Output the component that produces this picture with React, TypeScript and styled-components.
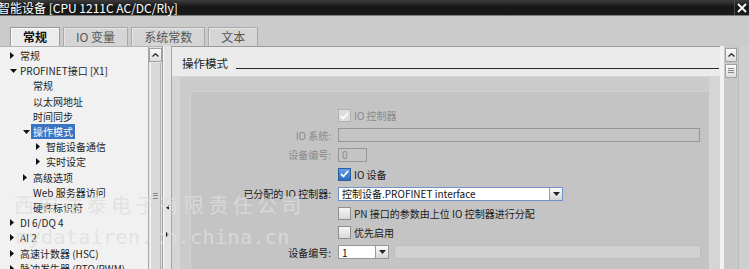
import styled, { createGlobalStyle } from "styled-components";

const GlobalStyle = createGlobalStyle`
  html, body {
    margin: 0;
    padding: 0;
    background: #cbcbcb;
    overflow: hidden;
  }
  body {
    font-family: "Noto Sans CJK SC", "Liberation Sans", sans-serif;
  }
`;

const Window = styled.div`
  position: relative;
  width: 749px;
  height: 269px;
  overflow: hidden;
  display: flex;
  flex-direction: column;
  background: #cbcbcb;
`;

const TitleBar = styled.div`
  height: 15px;
  flex: none;
  display: flex;
  align-items: center;
  background: linear-gradient(#3c3c3c, #171717 45%, #1b1b1b);
  border-bottom: 1px solid #808080;
  color: #fff;
`;

const Title = styled.div`
  flex: 1;
  margin-left: -2px;
  font-size: 12px;
  line-height: 15px;
  white-space: nowrap;
`;

const CloseBtn = styled.div`
  width: 14px;
  height: 15px;
  border-left: 1px solid #4c4c4c;
  display: flex;
  align-items: center;
  justify-content: center;
`;

const TabStrip = styled.div`
  height: 30px;
  flex: none;
  box-sizing: border-box;
  display: flex;
  align-items: flex-end;
  gap: 3px;
  padding-left: 10px;
`;

const Tab = styled.div<{ $active?: boolean }>`
  height: 19px;
  box-sizing: border-box;
  padding: 0 12px;
  display: flex;
  align-items: center;
  font-size: 12px;
  line-height: 16px;
  border: 1px solid ${(p) => (p.$active ? "#9a9a9a" : "#a9a9a9")};
  border-bottom: none;
  background: ${(p) => (p.$active ? "#ececec" : "#d5d5d5")};
  box-shadow: inset 1px 1px 0 ${(p) => (p.$active ? "#fafafa" : "#e6e6e6")};
  color: ${(p) => (p.$active ? "#111" : "#555")};
  font-weight: ${(p) => (p.$active ? 700 : 400)};
`;

const Body = styled.div`
  flex: 1;
  display: flex;
  min-height: 0;
`;

const TreePane = styled.div`
  width: 148px;
  flex: none;
  background: #f1f1f1;
  border-right: 1px solid #a8a8a8;
  border-top: 1px solid #b4b4b4;
  padding-top: 1px;
  overflow: hidden;
`;

const TreeRow = styled.div<{ $level: number }>`
  height: 15.2px;
  display: flex;
  align-items: center;
  padding-left: ${(p) => 7 + p.$level * 13}px;
  font-size: 10px;
  line-height: 13px;
  color: #1e1e1e;
  white-space: nowrap;
`;

const ArrowSlot = styled.div`
  width: 13px;
  flex: none;
  display: flex;
  align-items: center;
  padding-left: 3px;
  box-sizing: border-box;
`;

const TreeText = styled.span<{ $selected?: boolean }>`
  padding: 1px 2px;
  margin-left: -2px;
  background: ${(p) => (p.$selected ? "#3a74c2" : "transparent")};
  color: ${(p) => (p.$selected ? "#fff" : "inherit")};
`;

const TreeScroll = styled.div`
  width: 13px;
  flex: none;
  display: flex;
  flex-direction: column;
  background: #e3e3e3;
  border-right: 1px solid #9c9c9c;
  border-top: 1px solid #b4b4b4;
`;

const ScrollBtn = styled.div`
  height: 14px;
  flex: none;
  box-sizing: border-box;
  border: 1px solid #a2a2a2;
  background: linear-gradient(#fbfbfb, #dcdcdc);
  display: flex;
  align-items: center;
  justify-content: center;
  margin: 1px 0;
`;

const Thumb = styled.div`
  height: 270px;
  flex: none;
  margin: 0 1px;
  box-sizing: border-box;
  border-left: 1px solid #f6f6f6;
  border-right: 1px solid #b0b0b0;
  background: #d9d9d9;
  display: flex;
  justify-content: center;
  padding-top: 130px;
`;

const Grip = styled.div`
  width: 5px;
  height: 4px;
  border-top: 1px solid #888;
  border-bottom: 1px solid #888;
  position: relative;
  &::after {
    content: "";
    position: absolute;
    left: 0;
    right: 0;
    top: 1px;
    border-top: 1px solid #888;
  }
`;

const Splitter = styled.div`
  width: 7px;
  flex: none;
  display: flex;
  flex-direction: column;
  align-items: center;
  gap: 22px;
  padding-top: 159px;
  background: #e4e4e4;
  border-left: 1px solid #fafafa;
  border-right: 1px solid #a4a4a4;
`;

const Editor = styled.div`
  width: 548px;
  flex: none;
  display: flex;
  flex-direction: column;
`;

const EditorHeader = styled.div`
  height: 30px;
  flex: none;
  box-sizing: border-box;
  display: flex;
  align-items: flex-start;
  padding-left: 10px;
  background: #ebebeb;
  border-top: 1px solid #9a9a9a;
`;

const HeaderTitle = styled.div`
  margin-top: 8px;
  font-size: 11.5px;
  line-height: 16px;
  color: #222;
`;

const HeaderRule = styled.div`
  flex: 1;
  height: 1px;
  margin: 21px 1px 0 8px;
  background: #2a2a2a;
`;

const EditorBody = styled.div`
  flex: 1;
  display: flex;
  padding: 1px 11px 0 8px;
  background: #d5d5d5;
`;

const Area = styled.div`
  flex: 1;
  display: flex;
  padding: 14px 0 0 10px;
  background: #cbcbcb;
`;

const Group = styled.div`
  flex: 1;
  box-sizing: border-box;
  padding-top: 14px;
  background: #c4c4c4;
  border-top: 1px solid #d1d1d1;
  border-left: 1px solid #d1d1d1;
`;

const FormRow = styled.div`
  height: 19.5px;
  display: grid;
  grid-template-columns: 140px 1fr;
  column-gap: 7px;
  align-items: center;
  font-size: 10px;
  line-height: 13px;
`;

const Label = styled.div<{ $disabled?: boolean }>`
  text-align: right;
  white-space: nowrap;
  color: ${(p) => (p.$disabled ? "#8a8a8a" : "#1a1a1a")};
`;

const Field = styled.div`
  display: flex;
  align-items: center;
  gap: 3px;
  white-space: nowrap;
`;

const Box = styled.div<{ $checked?: boolean; $disabled?: boolean }>`
  width: 13px;
  height: 13px;
  box-sizing: border-box;
  flex: none;
  display: flex;
  align-items: center;
  justify-content: center;
  border: 1px solid
    ${(p) => (p.$checked && !p.$disabled ? "#2c5d9c" : p.$disabled ? "#b2b2b2" : "#8f8f8f")};
  background: ${(p) =>
    p.$checked && !p.$disabled
      ? "linear-gradient(#62a2e6, #2b6cc2)"
      : p.$disabled
        ? "#dcdcdc"
        : "linear-gradient(#f6f6f6, #d8d8d8)"};
`;

const FieldText = styled.span<{ $disabled?: boolean }>`
  color: ${(p) => (p.$disabled ? "#8a8a8a" : "#1a1a1a")};
`;

const Input = styled.div<{ $width: number; $white?: boolean; $blue?: boolean }>`
  width: ${(p) => p.$width}px;
  height: 14px;
  box-sizing: border-box;
  flex: none;
  display: flex;
  align-items: center;
  padding-left: 3px;
  border: 1px solid ${(p) => (p.$blue ? "#6f93c8" : "#969696")};
  background: ${(p) => (p.$white ? "#fff" : "transparent")};
  color: ${(p) => (p.$white ? "#111" : "#8a8a8a")};
  position: relative;
`;

const DropBtn = styled.div`
  position: absolute;
  right: 0;
  top: 0;
  bottom: 0;
  width: 12px;
  border-left: 1px solid #9a9a9a;
  background: linear-gradient(#fbfbfb, #d6d6d6);
  display: flex;
  align-items: center;
  justify-content: center;
`;

const LightBar = styled.div`
  width: 307px;
  height: 14px;
  margin-left: 2px;
  box-sizing: border-box;
  background: #d1d1d1;
  border: 1px solid #bdbdbd;
`;

const WhiteStrip = styled.div`
  width: 4px;
  flex: none;
  background: #f2f2f2;
`;

const RightScroll = styled.div`
  width: 15px;
  flex: none;
  box-sizing: border-box;
  padding: 1px 1px 0;
  background: #c8c8c8;
  border-right: 1px solid #bababa;
  display: flex;
  flex-direction: column;
`;

const Margin = styled.div`
  width: 10px;
  flex: none;
  background: #cfcfcf;
`;

const Watermark = styled.div<{ $top: number; $left: number; $size: number; $spacing: number; $mono?: boolean }>`
  position: absolute;
  top: ${(p) => p.$top}px;
  left: ${(p) => p.$left}px;
  font-size: ${(p) => p.$size}px;
  letter-spacing: ${(p) => p.$spacing}px;
  line-height: 1;
  font-family: ${(p) => (p.$mono ? '"DejaVu Sans Mono", monospace' : '"Noto Sans CJK SC", sans-serif')};
  color: rgba(222, 222, 222, 0.78);
  white-space: nowrap;
  pointer-events: none;
`;

const ArrowRight = () => (
  <svg width="4" height="7" viewBox="0 0 4 7">
    <polygon points="0,0 4,3.5 0,7" fill="#111" />
  </svg>
);

const ArrowDown = () => (
  <svg width="7" height="4" viewBox="0 0 7 4">
    <polygon points="0,0 7,0 3.5,4" fill="#111" />
  </svg>
);

const Chevron = () => (
  <svg width="7" height="4" viewBox="0 0 7 4">
    <polyline points="0.5,3.5 3.5,0.8 6.5,3.5" fill="none" stroke="#333" strokeWidth="1.4" />
  </svg>
);

const Tick = ({ color }: { color: string }) => (
  <svg width="9" height="8" viewBox="0 0 9 8">
    <polyline points="1,4 3.5,6.5 8,1" fill="none" stroke={color} strokeWidth="1.8" />
  </svg>
);

const DropArrow = () => (
  <svg width="7" height="4" viewBox="0 0 7 4">
    <polygon points="0,0 7,0 3.5,4" fill="#222" />
  </svg>
);

type TreeItem = { level: number; text: string; arrow?: "right" | "down"; selected?: boolean };

const tree: TreeItem[] = [
  { level: 0, arrow: "right", text: "常规" },
  { level: 0, arrow: "down", text: "PROFINET接口 [X1]" },
  { level: 1, text: "常规" },
  { level: 1, text: "以太网地址" },
  { level: 1, text: "时间同步" },
  { level: 1, arrow: "down", text: "操作模式", selected: true },
  { level: 2, arrow: "right", text: "智能设备通信" },
  { level: 2, arrow: "right", text: "实时设定" },
  { level: 1, arrow: "right", text: "高级选项" },
  { level: 1, text: "Web 服务器访问" },
  { level: 1, text: "硬件标识符" },
  { level: 0, arrow: "right", text: "DI 6/DQ 4" },
  { level: 0, arrow: "right", text: "AI 2" },
  { level: 0, arrow: "right", text: "高速计数器 (HSC)" },
  { level: 0, arrow: "right", text: "脉冲发生器 (PTO/PWM)" },
];

export default function App() {
  return (
    <Window>
      <GlobalStyle />
      <TitleBar>
        <Title>智能设备 [CPU 1211C AC/DC/Rly]</Title>
        <CloseBtn>
          <svg width="10" height="10" viewBox="0 0 10 10">
            <path d="M1 1 L9 9 M9 1 L1 9" stroke="#fff" strokeWidth="1.8" />
          </svg>
        </CloseBtn>
      </TitleBar>

      <TabStrip>
        <Tab $active>常规</Tab>
        <Tab>IO 变量</Tab>
        <Tab>系统常数</Tab>
        <Tab>文本</Tab>
      </TabStrip>

      <Body>
        <TreePane>
          {tree.map((item, i) => (
            <TreeRow key={i} $level={item.level}>
              <ArrowSlot>
                {item.arrow === "right" && <ArrowRight />}
                {item.arrow === "down" && <ArrowDown />}
              </ArrowSlot>
              <TreeText $selected={item.selected}>{item.text}</TreeText>
            </TreeRow>
          ))}
        </TreePane>

        <TreeScroll>
          <ScrollBtn>
            <Chevron />
          </ScrollBtn>
          <Thumb>
            <Grip />
          </Thumb>
        </TreeScroll>

        <Splitter>
          <svg width="3" height="5" viewBox="0 0 3 5">
            <polygon points="3,0 0,2.5 3,5" fill="#111" />
          </svg>
          <svg width="3" height="5" viewBox="0 0 3 5">
            <polygon points="0,0 3,2.5 0,5" fill="#111" />
          </svg>
        </Splitter>

        <Editor>
          <EditorHeader>
            <HeaderTitle>操作模式</HeaderTitle>
            <HeaderRule />
          </EditorHeader>
          <EditorBody>
            <Area>
              <Group>
                <FormRow>
                  <Label />
                  <Field>
                    <Box $checked $disabled>
                      <Tick color="#fff" />
                    </Box>
                    <FieldText $disabled>IO 控制器</FieldText>
                  </Field>
                </FormRow>
                <FormRow>
                  <Label $disabled>IO 系统:</Label>
                  <Field>
                    <Input $width={362} />
                  </Field>
                </FormRow>
                <FormRow>
                  <Label $disabled>设备编号:</Label>
                  <Field>
                    <Input $width={29}>0</Input>
                  </Field>
                </FormRow>
                <FormRow>
                  <Label />
                  <Field>
                    <Box $checked>
                      <Tick color="#fff" />
                    </Box>
                    <FieldText>IO 设备</FieldText>
                  </Field>
                </FormRow>
                <FormRow>
                  <Label>已分配的 IO 控制器:</Label>
                  <Field>
                    <Input $width={225} $white $blue>
                      控制设备.PROFINET interface
                      <DropBtn>
                        <DropArrow />
                      </DropBtn>
                    </Input>
                  </Field>
                </FormRow>
                <FormRow>
                  <Label />
                  <Field>
                    <Box />
                    <FieldText>PN 接口的参数由上位 IO 控制器进行分配</FieldText>
                  </Field>
                </FormRow>
                <FormRow>
                  <Label />
                  <Field>
                    <Box />
                    <FieldText>优先启用</FieldText>
                  </Field>
                </FormRow>
                <FormRow>
                  <Label>设备编号:</Label>
                  <Field>
                    <Input $width={51} $white>
                      1
                      <DropBtn>
                        <DropArrow />
                      </DropBtn>
                    </Input>
                    <LightBar />
                  </Field>
                </FormRow>
              </Group>
            </Area>
          </EditorBody>
        </Editor>

        <WhiteStrip />
        <RightScroll>
          <ScrollBtn>
            <Chevron />
          </ScrollBtn>
          <ScrollBtn>
            <svg width="6" height="6" viewBox="0 0 6 6">
              <path d="M0 0.5 H6 M0 2.5 H6 M0 4.5 H6" stroke="#888" strokeWidth="1" />
            </svg>
          </ScrollBtn>
        </RightScroll>
        <Margin />
      </Body>

      <Watermark $top={195} $left={14} $size={20} $spacing={4.3}>
        西安达泰电子有限责任公司
      </Watermark>
      <Watermark $top={227} $left={16} $size={20} $spacing={0.4} $mono>
        mydatairen.cn.china.cn
      </Watermark>
    </Window>
  );
}
